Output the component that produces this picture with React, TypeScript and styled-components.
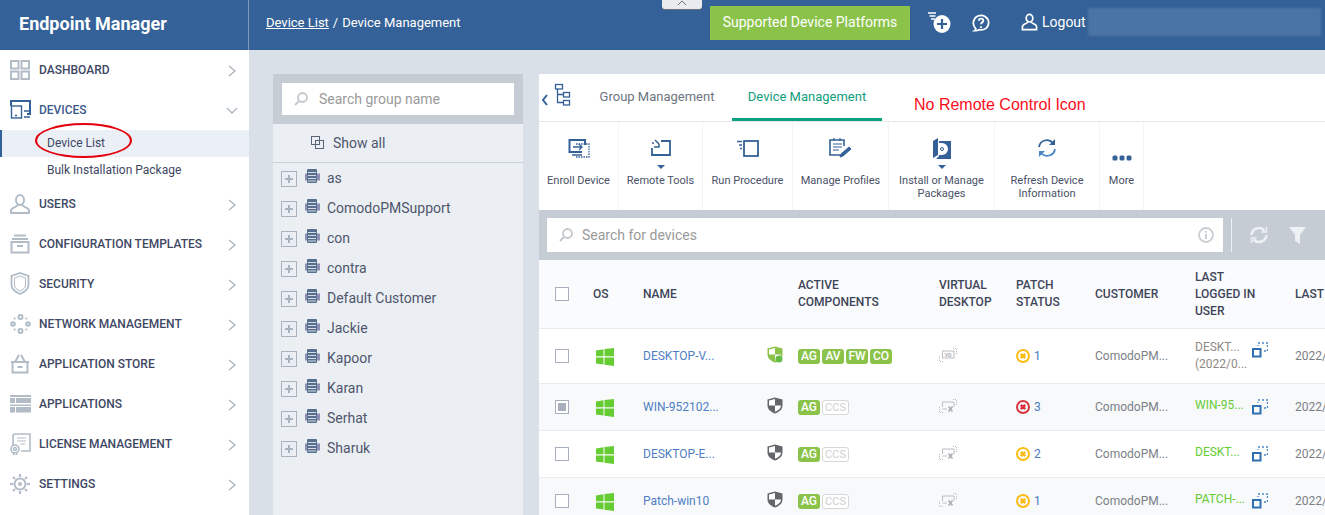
import React from 'react'
import styled, { createGlobalStyle } from 'styled-components'

const GlobalStyle = createGlobalStyle`
  html, body {
    margin: 0;
    padding: 0;
    height: 100%;
    overflow: hidden;
    font-family: Roboto, "Liberation Sans", sans-serif;
    background: #d9e0e8;
  }
  * { box-sizing: border-box; }
`

const Page = styled.div`
  width: 1325px;
  height: 515px;
  overflow: hidden;
  position: relative;
  display: flex;
  flex-direction: column;
`

const TopBar = styled.header`
  height: 50px;
  flex: none;
  display: flex;
  align-items: stretch;
  background: #346197;
  color: #fff;
  position: relative;
`

const Brand = styled.div`
  width: 249px;
  flex: none;
  border-right: 1px solid #7d9abb;
  padding: 0 0 3px 19px;
  display: flex;
  align-items: center;
  font-size: 18px;
  font-weight: 700;
`

const Crumbs = styled.div`
  padding: 0 0 5px 17px;
  width: 461px;
  flex: none;
  display: flex;
  align-items: center;
  gap: 4px;
  font-size: 13px;
  a { color: #fff; text-decoration: underline; }
`

const Collapse = styled.div`
  position: absolute;
  left: 662px;
  top: 0;
  width: 40px;
  height: 9px;
  background: #e9ebee;
  border-radius: 0 0 3px 3px;
  box-shadow: 0 1px 1px #6a7480;
  display: flex;
  justify-content: center;
  color: #6a7480;
`

const PlatformButton = styled.button`
  width: 200px;
  height: 34px;
  margin-top: 6px;
  padding: 0 0 2px;
  border: 0;
  background: #8bc34a;
  color: #fff;
  font: 400 14px Roboto, sans-serif;
  flex: none;
`

const HeaderIcons = styled.div`
  display: flex;
  align-items: center;
  padding: 0 0 5px 18px;
  gap: 21px;
`

const Logout = styled.div`
  margin-left: 31px;
  padding-bottom: 6px;
  display: flex;
  align-items: center;
  gap: 4px;
  font-size: 14px;
`

const BlurredUser = styled.div`
  width: 233px;
  height: 28px;
  margin: 8px 0 0 2px;
  background: #4a74a6;
  filter: blur(1px);
`

const Body = styled.div`
  flex: 1;
  display: flex;
  min-height: 0;
`

const Sidebar = styled.nav`
  width: 249px;
  flex: none;
  background: #fff;
  position: relative;
`

const NavRow = styled.div`
  height: 40px;
  display: flex;
  align-items: center;
  padding: 0 11px 1px 9px;
  font-size: 12px;
  font-weight: 500;
  color: #3e4763;
`

const NavIcon = styled.span`
  width: 22px;
  height: 22px;
  margin-right: 8px;
  display: flex;
  align-items: center;
  justify-content: center;
`

const NavLabel = styled.span<{ $active?: boolean }>`
  flex: 1;
  color: ${(p) => (p.$active ? '#3d5a8c' : '#3e4763')};
`

const SubRow = styled.div<{ $active?: boolean }>`
  height: 27px;
  display: flex;
  align-items: center;
  padding: 0 0 2px ${(p) => (p.$active ? '45px' : '47px')};
  font-size: 12px;
  color: #3e4763;
  background: ${(p) => (p.$active ? '#ebf0f6' : 'transparent')};
  border-left: ${(p) => (p.$active ? '2px solid #346197' : '0')};
`

const Ring = styled.div`
  position: absolute;
  left: 35px;
  top: 73px;
  width: 97px;
  height: 35px;
  border: 2px solid #e3000f;
  border-radius: 50%;
`

const Main = styled.main`
  flex: 1;
  min-width: 0;
  display: flex;
  gap: 16px;
  padding: 24px 0 0 24px;
`

const GroupPanel = styled.section`
  width: 250px;
  flex: none;
  background: #ebeff4;
`

const GroupSearchBar = styled.div`
  height: 50px;
  background: #c5ccd4;
  padding: 9px;
`

const SearchBox = styled.div`
  height: 32px;
  background: #fff;
  display: flex;
  align-items: center;
  padding-left: 12px;
  gap: 11px;
  font-size: 14px;
  color: #9a9a9a;
`

const ShowAll = styled.div`
  height: 39px;
  border-bottom: 1px solid #c9cfd6;
  display: flex;
  align-items: center;
  padding-left: 38px;
  gap: 8px;
  font-size: 14px;
  color: #4f566b;
`

const GroupRow = styled.div`
  height: 30px;
  display: flex;
  align-items: center;
  padding-left: 8px;
  font-size: 14px;
  color: #4f566b;
`

const Expander = styled.span`
  width: 16px;
  height: 16px;
  margin: 2px 8px 0 0;
  border: 1px solid #a9b2bf;
  color: #a9b2bf;
  display: flex;
  align-items: center;
  justify-content: center;
`

const GroupIcon = styled.span`
  width: 15px;
  height: 15px;
  margin: -4px 7px 0 0;
  display: flex;
`

const DevicePanel = styled.section`
  flex: 1;
  min-width: 0;
  background: #fff;
  overflow: hidden;
`

const TabBar = styled.div`
  height: 48px;
  display: flex;
  border-bottom: 1px solid #e4e7eb;
  font-size: 13px;
`

const TreeToggle = styled.div`
  width: 43px;
  flex: none;
  padding: 6px 0 0 2px;
`

const Tab = styled.div<{ $active?: boolean }>`
  width: 150px;
  height: 47px;
  padding-top: 15px;
  text-align: center;
  color: ${(p) => (p.$active ? '#0f9d7c' : '#6d7480')};
  border-bottom: ${(p) => (p.$active ? '3px solid #0aa27e' : '0')};
`

const Annotation = styled.div`
  margin-left: 32px;
  padding-top: 22px;
  color: #fb0d1b;
  font-size: 16px;
  font-family: "Liberation Sans", Arial, sans-serif;
`

const Toolbar = styled.div`
  height: 88px;
  display: flex;
`

const ToolButton = styled.div<{ $w: number }>`
  width: ${(p) => p.$w}px;
  flex: none;
  border-right: 1px solid #f3f4f6;
  display: flex;
  flex-direction: column;
  align-items: center;
  text-align: center;
  font-size: 11px;
  line-height: 13px;
  color: #4a5166;
  padding-top: 14px;
`

const ToolIcon = styled.div`
  height: 24px;
  display: flex;
  align-items: center;
  justify-content: center;
`

const Caret = styled.div<{ $show?: boolean }>`
  height: 14px;
  padding-top: 5px;
  &::after {
    content: '';
    display: ${(p) => (p.$show ? 'block' : 'none')};
    border: 4px solid transparent;
    border-top: 4px solid #346197;
    border-bottom: 0;
  }
`

const MoreDots = styled.svg`
  margin: -19px 0 13px;
`

const FilterBar = styled.div`
  height: 50px;
  background: #c5ccd4;
  display: flex;
  align-items: center;
  padding-left: 8px;
`

const DeviceSearch = styled(SearchBox)`
  width: 676px;
  height: 34px;
  padding: 0 9px 0 12px;
  gap: 9px;
  span { flex: 1; }
`

const FilterActions = styled.div`
  height: 34px;
  margin-left: 8px;
  border-left: 1px solid #eef1f4;
  display: flex;
  align-items: center;
  padding-left: 18px;
  gap: 21px;
`

const gridColumns = '54px 50px 124px 31px 141px 77px 79px 100px 100px 30px'

const HeadRow = styled.div`
  height: 69px;
  display: grid;
  grid-template-columns: ${gridColumns};
  align-items: center;
  background: #fafbfc;
  border-bottom: 1px solid #e8ebef;
  font-size: 12px;
  font-weight: 500;
  line-height: 17px;
  color: #3e4558;
`

const Row = styled.div<{ $h: number; $alt?: boolean }>`
  height: ${(p) => p.$h}px;
  display: grid;
  grid-template-columns: ${gridColumns};
  align-items: center;
  background: ${(p) => (p.$alt ? '#f8f9fb' : '#fff')};
  border-bottom: 1px solid #e8ebef;
  font-size: 12px;
  color: #7b7f87;
`

const CheckCell = styled.div`
  padding-left: 16px;
  display: flex;
`

const Check = styled.span<{ $on?: boolean }>`
  width: 14px;
  height: 14px;
  border: 1px solid #a7afbd;
  background: #fff;
  padding: 2px;
  &::after {
    content: '';
    display: ${(p) => (p.$on ? 'block' : 'none')};
    width: 8px;
    height: 8px;
    background: #a7afbd;
  }
`

const OsCell = styled.div`
  display: flex;
  padding: 2px 0 0 3px;
`

const NameLink = styled.span`
  color: #4f7ec4;
`

const Badges = styled.div`
  display: flex;
  gap: 2px;
`

const Badge = styled.span<{ $off?: boolean }>`
  height: 15px;
  width: ${(p) => (p.$off ? '27px' : '22px')};
  border-radius: 3px;
  text-align: center;
  font-size: ${(p) => (p.$off ? '11px' : '12px')};
  color: ${(p) => (p.$off ? '#cfcfcf' : '#fff')};
  background: ${(p) => (p.$off ? '#fff' : '#8bc34a')};
  border: ${(p) => (p.$off ? '1px solid #d8d8d8' : '0')};
  line-height: ${(p) => (p.$off ? '13px' : '15px')};
  font-weight: ${(p) => (p.$off ? 400 : 500)};
`

const PatchCell = styled.div`
  display: flex;
  align-items: center;
  gap: 4px;
  color: #4a78c0;
`

const UserCell = styled.div`
  display: flex;
  justify-content: space-between;
  align-items: center;
  padding-right: 27px;
`

const UserName = styled.span<{ $online?: boolean }>`
  color: ${(p) => (p.$online ? '#66cc33' : '#8f8a85')};
  line-height: 17px;
  margin-top: ${(p) => (p.$online ? '-4px' : '0')};
  white-space: pre-line;
`

const RemoteSlot = styled.span<{ $raised?: boolean }>`
  display: flex;
  margin-top: ${(p) => (p.$raised ? '-12px' : '0')};
`

const LastCell = styled.div`
  white-space: nowrap;
`

const Gray = '#b1bcc7'
const Blue = '#346197'

const navIcons: Record<string, React.ReactNode> = {
  dashboard: (
    <svg width="20" height="20" viewBox="0 0 20 20" fill="none" stroke={Gray} strokeWidth="2">
      <rect x="1" y="1" width="7.500" height="7.500" /><rect x="11.500" y="1" width="7.500" height="7.500" />
      <rect x="1" y="11.500" width="7.500" height="7.500" /><rect x="11.500" y="11.500" width="7.500" height="7.500" />
    </svg>
  ),
  devices: (
    <svg width="21" height="19" viewBox="0 0 21 19" fill="none" stroke={Blue} strokeWidth="1.400">
      <path d="M1 6V1h19v13h-3" strokeWidth="2" />
      <rect x="1.500" y="6" width="10" height="12" />
      <path d="M5 15.500h2M14 11h6M14 17h6" />
    </svg>
  ),
  users: (
    <svg width="20" height="20" viewBox="0 0 20 20" fill="none" stroke={Gray} strokeWidth="2">
      <ellipse cx="10" cy="6" rx="4" ry="5" />
      <path d="M7.500 11c0 2-6.500 2.500-6.500 5.500V19h18v-2.500c0-3-6.500-3.500-6.500-5.500" />
    </svg>
  ),
  config: (
    <svg width="20" height="20" viewBox="0 0 20 20" fill="none" stroke={Gray} strokeWidth="2">
      <path d="M4 1.500h12M2 5h16" /><rect x="1.500" y="8" width="17" height="10.500" /><path d="M7 12h6" />
    </svg>
  ),
  security: (
    <svg width="20" height="23" viewBox="0 0 20 23" fill="none" stroke={Gray}>
      <path d="M10 1L1.500 4v9c0 4 4 7 8.500 9 4.500-2 8.500-5 8.500-9V4z" strokeWidth="1.800" />
      <path d="M10 4L4.500 6v7c0 3 2.500 4.500 5.500 6 3-1.500 5.500-3 5.500-6V6z" strokeWidth="1" />
    </svg>
  ),
  network: (
    <svg width="21" height="20" viewBox="0 0 21 20" fill="none" stroke={Gray} strokeWidth="2">
      <circle cx="10.500" cy="3" r="2" /><circle cx="10.500" cy="17" r="2" />
      <circle cx="3" cy="10" r="1.800" /><circle cx="18" cy="10" r="1.800" />
      <path d="M4 5l1.500-1M15.500 4L17 5M4 15l1.500 1M15.500 16l1.500-1" />
    </svg>
  ),
  store: (
    <svg width="20" height="20" viewBox="0 0 20 20" fill="none" stroke={Gray} strokeWidth="2">
      <path d="M1 8h18M2.500 8v10.500h15V8M5 8l4-7M15 8l-4-7M7.500 13h5" />
    </svg>
  ),
  apps: (
    <svg width="21" height="18" viewBox="0 0 21 18" fill={Gray}>
      <rect width="21" height="2" /><rect y="3" width="5" height="5" /><rect x="6" y="3" width="15" height="5" />
      <rect y="9.500" width="21" height="1.500" /><rect y="12" width="5" height="5.500" /><rect x="6" y="12" width="15" height="5.500" />
    </svg>
  ),
  license: (
    <svg width="21" height="22" viewBox="0 0 21 22" fill="none" stroke={Gray} strokeWidth="1.600">
      <path d="M3 12V3c0-1 1-2 2-2h15v17H11" /><path d="M7 5h9M7 8h9M10 11h5" strokeWidth="1" />
      <circle cx="5" cy="16" r="4" /><circle cx="5" cy="16" r="1.500" /><path d="M3.500 20v2M6.500 20v2" />
    </svg>
  ),
  settings: (
    <svg width="20" height="20" viewBox="0 0 20 20" fill="none" stroke={Gray} strokeWidth="2">
      <circle cx="10" cy="10" r="5.500" /><circle cx="10" cy="10" r="1" />
      <path d="M10 0v3M10 17v3M0 10h3M17 10h3M3 3l2 2M15 15l2 2M17 3l-2 2M5 15l-2 2" />
    </svg>
  ),
}

const Chevron = ({ open }: { open?: boolean }) => (
  <svg width="12" height="12" viewBox="0 0 12 12" fill="none" stroke="#a9b3bd" strokeWidth="1.300" style={{ marginTop: 3 }}>
    {open ? <path d="M1 3l5 5 5-5" /> : <path d="M3 1l6 5-6 5" />}
  </svg>
)

const SearchGlass = () => (
  <svg width="14" height="14" viewBox="0 0 14 14" fill="none" stroke="#c3c7cc" strokeWidth="1.800">
    <circle cx="8.500" cy="5.500" r="4.500" /><path d="M5 9l-4 4" />
  </svg>
)

const ServerIcon = () => (
  <svg width="15" height="15" viewBox="0 0 15 15">
    <rect x="0" y="4.500" width="15" height="7" fill="#8e90b4" />
    <rect x="2" y="0" width="10" height="14" rx="1" fill="#56708e" />
    <path d="M3 3.500h8M3 6.500h8M3 9.500h8M3 12h8" stroke="#d4dbe4" strokeWidth="1" />
  </svg>
)

const WindowsLogo = () => (
  <svg width="18" height="18" viewBox="0 0 18 18" fill="#66cc33">
    <path d="M0 2.600L7.500 1.300V8.300H0zM8.500 1.100L18 0V8.300H8.500zM0 9.500H7.500V16.600L0 15.400zM8.500 9.500H18V18L8.500 16.800z" />
  </svg>
)

const Shield = ({ ok }: { ok?: boolean }) =>
  ok ? (
    <svg width="16" height="17" viewBox="0 0 16 17">
      <path d="M8 .5L.5 2.500v6C.5 12.500 4 15 8 16.500c4-1.500 7.500-4 7.500-8v-6z" fill="#8bc34a" />
      <path d="M8 2L2 3.500v5h6zM8 8.500h6c0 3-3 5-6 6.300z" fill="#fff" />
      <circle cx="12" cy="13" r="3.500" fill="#66bb44" />
    </svg>
  ) : (
    <svg width="16" height="17" viewBox="0 0 16 17">
      <path d="M8 .5L.5 2.500v6C.5 12.500 4 15 8 16.500c4-1.500 7.500-4 7.500-8v-6z" fill="#63666b" />
      <path d="M8 2L2 3.500v5h6zM8 8.500h6c0 3-3 5-6 6.300z" fill="#fff" />
    </svg>
  )

const VirtualIcon = ({ vd }: { vd?: boolean }) => (
  <svg width="18" height="14" viewBox="0 0 18 14" fill="none" stroke="#b9bdc2" strokeWidth="1">
    <path d="M.5 8v5.500H5" strokeDasharray="1 1" />
    <path d="M14 .5h3.500V6" strokeDasharray="1 1" />
    {vd ? (
      <>
        <rect x="3.500" y="3" width="11.500" height="7" />
        <text x="5.500" y="8.500" fontSize="5.500" stroke="none" fill="#b0b4ba" fontFamily="Roboto" fontWeight="700">VD</text>
      </>
    ) : (
      <>
        <path d="M3.500 8V3H15v5M3.500 10H8" />
        <path d="M9.500 7.500l4 5M13.500 7.500l-4 5" strokeWidth="1.600" stroke="#a9adb3" />
      </>
    )}
  </svg>
)

const StatusIcon = ({ color }: { color: string }) => (
  <svg width="14" height="14" viewBox="0 0 14 14" fill="none" stroke={color}>
    <circle cx="7" cy="7" r="6" strokeWidth="2" />
    <path d="M4.800 4.800l4.400 4.400M9.200 4.800l-4.400 4.400" strokeWidth="2.600" />
  </svg>
)

const RemoteIcon = () => (
  <svg width="16" height="16" viewBox="0 0 16 16" fill="none">
    <path d="M6 1h2M10 1h2M14 1h2M15.500 3v2M15.500 7v2M12 9h2M6 3v1" stroke="#4a86c5" strokeWidth="1.300" />
    <rect x="1" y="7" width="7.500" height="7.500" stroke="#2f6fb2" strokeWidth="2" />
  </svg>
)

const toolIcons: Record<string, React.ReactNode> = {
  enroll: (
    <svg width="22" height="20" viewBox="0 0 22 20" fill="none" stroke={Blue}>
      <path d="M14 14H1.500V2H17v5" strokeWidth="2" />
      <path d="M4 17h10M5 9h9M11 6l3 3-3 3" strokeWidth="1.300" />
      <path d="M8 6h13v13H8" strokeWidth="1.300" strokeDasharray="1.500 1" />
    </svg>
  ),
  remote: (
    <svg width="20" height="18" viewBox="0 0 20 18" fill="none" stroke={Blue}>
      <path d="M10 2h9v14H1V9" strokeWidth="1.800" />
      <path d="M1 4h2M4 1l4 4M3 8h5V5" strokeWidth="1.500" />
    </svg>
  ),
  run: (
    <svg width="22" height="17" viewBox="0 0 22 17" fill="none" stroke={Blue}>
      <rect x="7" y="1" width="14" height="15" strokeWidth="1.800" />
      <path d="M0 1.500h5M2 5h3M3 8.500h2" strokeWidth="1.400" />
    </svg>
  ),
  profiles: (
    <svg width="23" height="23" viewBox="0 0 23 23" fill="none" stroke={Blue}>
      <path d="M15 18H1V3h14v6" strokeWidth="1.600" />
      <path d="M5 1v3M11 1v3M4 7h9M4 10h9M4 13h6" strokeWidth="1.200" />
      <path d="M11 20l1-3 8-7 2 2-8 7z" fill={Blue} strokeWidth="1" />
    </svg>
  ),
  install: (
    <svg width="18" height="21" viewBox="0 0 18 21" fill="none">
      <path d="M5 0v17l-5 3V3z" fill={Blue} />
      <path d="M6 3h12v18H3l3-3z" fill={Blue} />
      <path d="M6 5h3a6 6 0 0 1 0 12H6z" fill="#fff" />
      <circle cx="9" cy="11" r="1.500" stroke={Blue} />
    </svg>
  ),
  refresh: (
    <svg width="20" height="20" viewBox="0 0 20 20" fill="none">
      <path d="M2 9a8 8 0 0 1 14-4" stroke={Blue} strokeWidth="1.800" />
      <path d="M18 1v6h-6z" fill={Blue} />
      <path d="M18 11a8 8 0 0 1-14 4" stroke="#4a86c5" strokeWidth="1.800" />
      <path d="M2 19v-6h6z" fill="#4a86c5" />
    </svg>
  ),
}

const navBottom = [
  { key: 'users', label: 'USERS' },
  { key: 'config', label: 'CONFIGURATION TEMPLATES' },
  { key: 'security', label: 'SECURITY' },
  { key: 'network', label: 'NETWORK MANAGEMENT' },
  { key: 'store', label: 'APPLICATION STORE' },
  { key: 'apps', label: 'APPLICATIONS' },
  { key: 'license', label: 'LICENSE MANAGEMENT' },
  { key: 'settings', label: 'SETTINGS' },
]

const groups = ['as', 'ComodoPMSupport', 'con', 'contra', 'Default Customer', 'Jackie', 'Kapoor', 'Karan', 'Serhat', 'Sharuk']

const tools = [
  { key: 'enroll', w: 80, label: 'Enroll Device' },
  { key: 'remote', w: 84, label: 'Remote Tools', caret: true },
  { key: 'run', w: 90, label: 'Run Procedure' },
  { key: 'profiles', w: 96, label: 'Manage Profiles' },
  { key: 'install', w: 106, label: 'Install or Manage Packages', caret: true },
  { key: 'refresh', w: 105, label: 'Refresh Device Information' },
]

const devices = [
  { name: 'DESKTOP-V...', h: 55, ok: true, badges: ['AG', 'AV', 'FW', 'CO'], vd: true, color: '#fbbc15', patch: 1, user: 'DESKT...\n(2022/0...', online: false, checked: false },
  { name: 'WIN-952102...', h: 47, badges: ['AG'], color: '#d8343f', patch: 3, user: 'WIN-95...', online: true, checked: true },
  { name: 'DESKTOP-E...', h: 47, badges: ['AG'], color: '#fbbc15', patch: 2, user: 'DESKT...', online: true, checked: false },
  { name: 'Patch-win10', h: 47, badges: ['AG'], color: '#fbbc15', patch: 1, user: 'PATCH-...', online: true, checked: false },
]

const NavItem = ({ k, label, open, active }: { k: string; label: string; open?: boolean; active?: boolean }) => (
  <NavRow>
    <NavIcon>{navIcons[k]}</NavIcon>
    <NavLabel $active={active}>{label}</NavLabel>
    <Chevron open={open} />
  </NavRow>
)

export default function App() {
  return (
    <Page>
      <GlobalStyle />
      <TopBar>
        <Brand>Endpoint Manager</Brand>
        <Crumbs>
          <a>Device List</a>
          <span>/</span>
          <span>Device Management</span>
        </Crumbs>
        <Collapse>
          <svg width="10" height="6" viewBox="0 0 10 6" fill="none" stroke="currentColor"><path d="M1 5l4-4 4 4" /></svg>
        </Collapse>
        <PlatformButton>Supported Device Platforms</PlatformButton>
        <HeaderIcons>
          <svg width="23" height="21" viewBox="0 0 23 21">
            <path d="M0 1h8M1.500 4h6M3 7h4" stroke="#fff" strokeWidth="1.300" />
            <ellipse cx="14" cy="12" rx="8.500" ry="9" fill="#fff" />
            <path d="M14 7v10M9 12h10" stroke={Blue} strokeWidth="2.200" />
          </svg>
          <svg width="18" height="20" viewBox="0 0 20 20" fill="none" stroke="#fff" strokeWidth="2">
            <path d="M5 18.500c1 0 2-.5 3-1 6 1 10.500-2.500 10.500-8A8.500 8.500 0 1 0 4 16c.3 1-.2 2-1 2.500z" />
            <path d="M7.500 7.500c.5-3.500 5.500-3 5 0-.3 2-2.500 2-2.500 4" />
            <path d="M10 13.500v2" />
          </svg>
        </HeaderIcons>
        <Logout>
          <svg width="17" height="18" viewBox="0 0 18 18" fill="none" stroke="#fff" strokeWidth="1.800">
            <ellipse cx="9" cy="5" rx="3.500" ry="4" />
            <path d="M7 9c0 2-5.500 2-5.500 5v3h15v-3c0-3-5.500-3-5.500-5" />
          </svg>
          <span>Logout</span>
        </Logout>
        <BlurredUser />
      </TopBar>
      <Body>
        <Sidebar>
          <NavItem k="dashboard" label="DASHBOARD" />
          <NavItem k="devices" label="DEVICES" open active />
          <SubRow $active>Device List</SubRow>
          <SubRow>Bulk Installation Package</SubRow>
          {navBottom.map((n) => <NavItem key={n.key} k={n.key} label={n.label} />)}
          <Ring />
        </Sidebar>
        <Main>
          <GroupPanel>
            <GroupSearchBar>
              <SearchBox><SearchGlass />Search group name</SearchBox>
            </GroupSearchBar>
            <ShowAll>
              <svg width="14" height="14" viewBox="0 0 14 14" fill="none" stroke="#5a6478">
                <rect x=".5" y=".5" width="8" height="8" /><rect x="4.500" y="4.500" width="8" height="8" />
              </svg>
              Show all
            </ShowAll>
            {groups.map((g) => (
              <GroupRow key={g}>
                <Expander>
                  <svg width="8" height="8" viewBox="0 0 8 8" stroke="currentColor" strokeWidth="2"><path d="M4 0v8M0 4h8" /></svg>
                </Expander>
                <GroupIcon><ServerIcon /></GroupIcon>
                {g}
              </GroupRow>
            ))}
          </GroupPanel>
          <DevicePanel>
            <TabBar>
              <TreeToggle>
                <svg width="30" height="26" viewBox="0 0 30 26" fill="none" stroke={Blue}>
                  <path d="M6 15l-4 5 4 5" strokeWidth="2" />
                  <rect x="14.500" y="4.500" width="7" height="4.500" strokeWidth="1.300" />
                  <rect x="22.500" y="12.500" width="6" height="4.500" strokeWidth="1.300" />
                  <rect x="22.500" y="20.500" width="6" height="4.500" strokeWidth="1.300" />
                  <path d="M16.500 9V22.500H22.500M16.500 14.500H22.500" strokeWidth="1.300" />
                </svg>
              </TreeToggle>
              <Tab>Group Management</Tab>
              <Tab $active>Device Management</Tab>
              <Annotation>No Remote Control Icon</Annotation>
            </TabBar>
            <Toolbar>
              {tools.map((t) => (
                <ToolButton key={t.key} $w={t.w}>
                  <ToolIcon>{toolIcons[t.key]}</ToolIcon>
                  <Caret $show={t.caret} />
                  <div>{t.label}</div>
                </ToolButton>
              ))}
              <ToolButton $w={44}>
                <ToolIcon />
                <Caret />
                <MoreDots width="20" height="6" viewBox="0 0 20 6" fill={Blue}>
                  <rect x=".5" y=".5" width="5" height="5" rx="1.500" />
                  <rect x="7.500" y=".5" width="5" height="5" rx="1.500" />
                  <rect x="14.500" y=".5" width="5" height="5" rx="1.500" />
                </MoreDots>
                <div>More</div>
              </ToolButton>
            </Toolbar>
            <FilterBar>
              <DeviceSearch>
                <SearchGlass />
                <span>Search for devices</span>
                <svg width="16" height="16" viewBox="0 0 16 16" fill="none" stroke="#c9ced3">
                  <circle cx="8" cy="8" r="7" strokeWidth="1.800" />
                  <path d="M8 7v5M8 4v1.800" strokeWidth="2" />
                </svg>
              </DeviceSearch>
              <FilterActions>
                <svg width="18" height="18" viewBox="0 0 18 18" fill="none" stroke="#eef1f4" strokeWidth="2.600">
                  <path d="M1.500 9a7.500 7.500 0 0 1 13-4.500M16.500 9a7.500 7.500 0 0 1-13 4.500" />
                  <path d="M16.500 1v5h-5M1.500 17v-5h5" strokeWidth="1.500" />
                </svg>
                <svg width="17" height="17" viewBox="0 0 17 17" fill="#eef1f4"><path d="M0 0h17l-6 8v9l-5-3V8z" /></svg>
              </FilterActions>
            </FilterBar>
            <HeadRow>
              <CheckCell><Check /></CheckCell>
              <div>OS</div>
              <div>NAME</div>
              <div />
              <div>ACTIVE<br />COMPONENTS</div>
              <div>VIRTUAL<br />DESKTOP</div>
              <div>PATCH<br />STATUS</div>
              <div>CUSTOMER</div>
              <div>LAST<br />LOGGED IN<br />USER</div>
              <LastCell>LAST</LastCell>
            </HeadRow>
            {devices.map((d, i) => (
              <Row key={d.name} $h={d.h} $alt={i % 2 === 1}>
                <CheckCell><Check $on={d.checked} /></CheckCell>
                <OsCell><WindowsLogo /></OsCell>
                <NameLink>{d.name}</NameLink>
                <div><Shield ok={d.ok} /></div>
                <Badges>
                  {d.badges.map((b) => <Badge key={b}>{b}</Badge>)}
                  {!d.ok && <Badge $off>CCS</Badge>}
                </Badges>
                <div><VirtualIcon vd={d.vd} /></div>
                <PatchCell><StatusIcon color={d.color} />{d.patch}</PatchCell>
                <div>ComodoPM...</div>
                <UserCell>
                  <UserName $online={d.online}>{d.user}</UserName>
                  <RemoteSlot $raised={!d.online}><RemoteIcon /></RemoteSlot>
                </UserCell>
                <LastCell>2022/</LastCell>
              </Row>
            ))}
          </DevicePanel>
        </Main>
      </Body>
    </Page>
  )
}
